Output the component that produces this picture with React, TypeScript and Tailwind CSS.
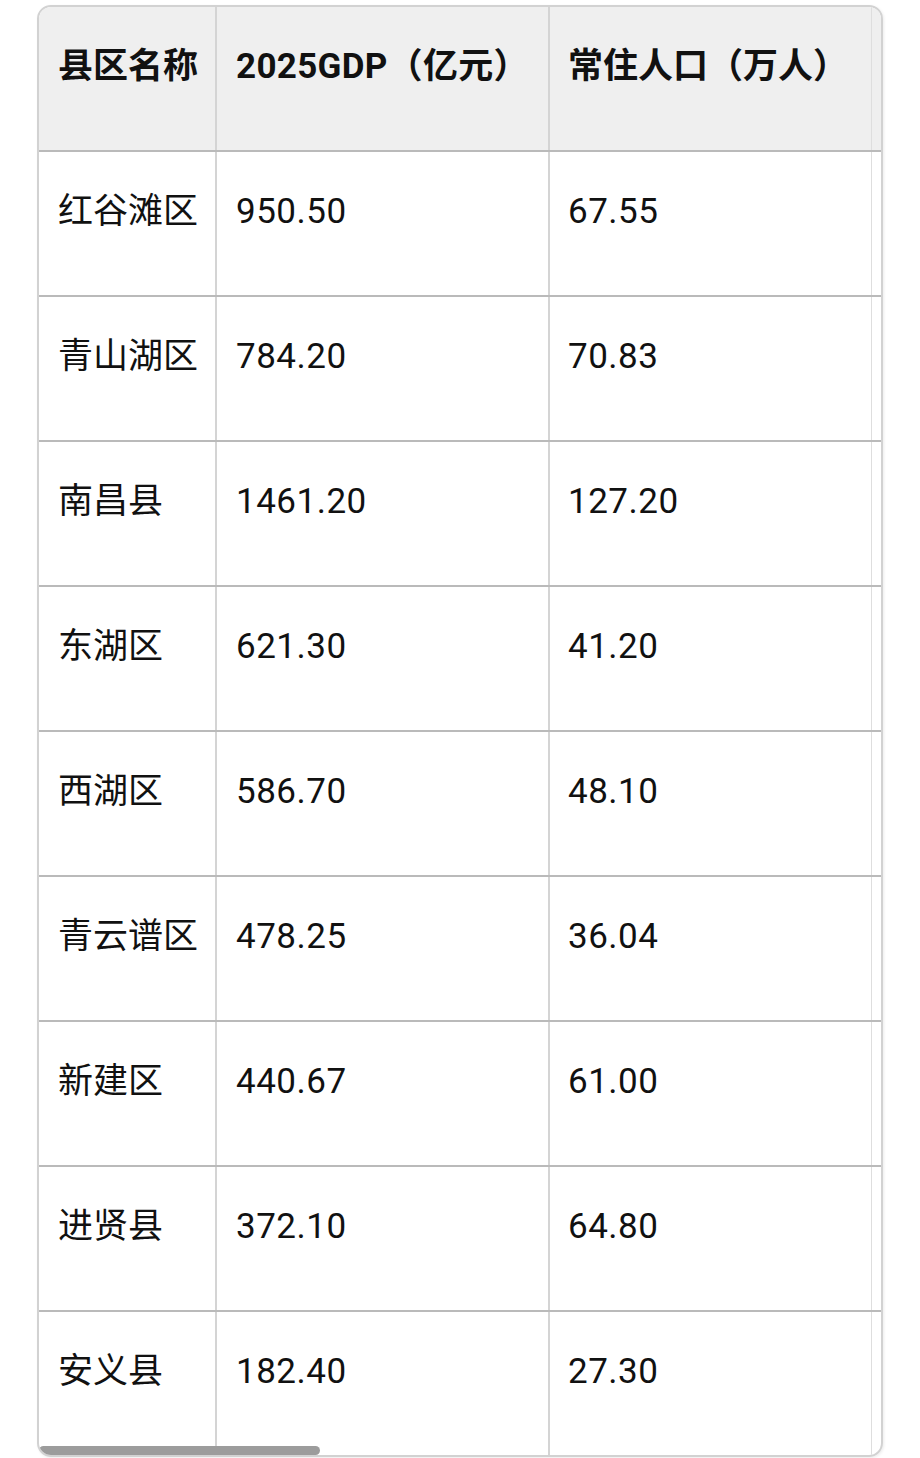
import React from "react";

const rows: [string, string, string][] = [
  ["红谷滩区", "950.50", "67.55"],
  ["青山湖区", "784.20", "70.83"],
  ["南昌县", "1461.20", "127.20"],
  ["东湖区", "621.30", "41.20"],
  ["西湖区", "586.70", "48.10"],
  ["青云谱区", "478.25", "36.04"],
  ["新建区", "440.67", "61.00"],
  ["进贤县", "372.10", "64.80"],
  ["安义县", "182.40", "27.30"],
];

const font = { fontFamily: '"Roboto", "Noto Sans CJK SC", sans-serif' };

export default function App() {
  return (
    <div className="w-[920px] h-[1458px] bg-white pt-[5px] pl-[37px]" style={font}>
      <div className="relative w-[846px] h-[1452px] rounded-[14px] border-2 border-[#d2d2d2] overflow-hidden shadow-[1px_1px_3px_rgba(0,0,0,0.08)]">
        <div className="grid grid-cols-[178px_333px_322px_1fr] h-[143px] bg-[#efefef] text-[35px] leading-[42px] font-bold text-[#111]">
          <div className="pl-[19px] pt-[39px] border-r-2 border-[#d4d4d4]">县区名称</div>
          <div className="pl-[19px] pt-[39px] border-r-2 border-[#d4d4d4] tracking-[0.3px]">2025GDP（亿元）</div>
          <div className="pl-[18px] pt-[39px] border-r border-[#dedede]">常住人口（万人）</div>
          <div />
        </div>
        {rows.map((r) => (
          <div
            key={r[0]}
            className="grid grid-cols-[178px_333px_322px_1fr] h-[145px] border-t-2 border-[#bababa] text-[35px] leading-[42px] text-[#111]"
          >
            <div className="pl-[19px] pt-[39px] border-r-2 border-[#d4d4d4]">{r[0]}</div>
            <div className="pl-[19px] pt-[39px] border-r-2 border-[#d4d4d4] tracking-[0.5px]">{r[1]}</div>
            <div className="pl-[18px] pt-[39px] border-r border-[#dedede] tracking-[0.5px]">{r[2]}</div>
            <div />
          </div>
        ))}
        <div className="absolute left-0 bottom-0 w-[281px] h-[9px] rounded-full bg-[#9c9c9c]" />
      </div>
    </div>
  );
}
